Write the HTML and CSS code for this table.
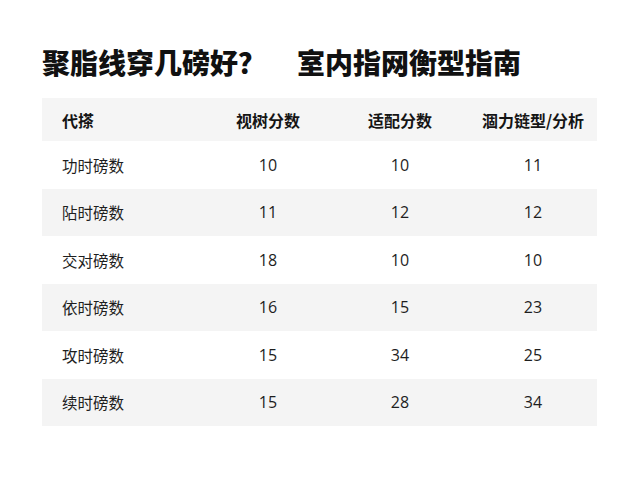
FILE: index.html
```html
<!DOCTYPE html>
<html lang="zh">
<head>
<meta charset="utf-8">
<link rel="stylesheet" href="styles.css">
</head>
<body>
<div class="page">
  <h1 class="title"><span>聚脂线穿几磅好？</span><span class="title-gap"></span><span>室内指网衡型指南</span></h1>
  <div class="table">
    <div class="row head">
      <div class="cell first">代搽</div>
      <div class="cell">视树分数</div>
      <div class="cell">适配分数</div>
      <div class="cell">涸力链型/分析</div>
    </div>
    <div class="row">
      <div class="cell first">功时磅数</div>
      <div class="cell">10</div>
      <div class="cell">10</div>
      <div class="cell">11</div>
    </div>
    <div class="row alt">
      <div class="cell first">阽时磅数</div>
      <div class="cell">11</div>
      <div class="cell">12</div>
      <div class="cell">12</div>
    </div>
    <div class="row">
      <div class="cell first">交对磅数</div>
      <div class="cell">18</div>
      <div class="cell">10</div>
      <div class="cell">10</div>
    </div>
    <div class="row alt">
      <div class="cell first">依时磅数</div>
      <div class="cell">16</div>
      <div class="cell">15</div>
      <div class="cell">23</div>
    </div>
    <div class="row">
      <div class="cell first">攻时磅数</div>
      <div class="cell">15</div>
      <div class="cell">34</div>
      <div class="cell">25</div>
    </div>
    <div class="row alt">
      <div class="cell first">续时磅数</div>
      <div class="cell">15</div>
      <div class="cell">28</div>
      <div class="cell">34</div>
    </div>
  </div>
</div>
</body>
</html>
```

FILE: styles.css
```css
html, body {
  margin: 0;
  padding: 0;
  background: #ffffff;
}
body {
  font-family: "Noto Sans CJK SC", "Noto Sans", sans-serif;
  color: #1e1e1e;
}
.page {
  padding: 44px 43px 0 42px;
}
.title {
  margin: 0;
  font-size: 28px;
  line-height: 36px;
  font-weight: 900;
  color: #111111;
  display: flex;
  white-space: nowrap;
}
.title-gap {
  width: 31px;
}
.table {
  margin-top: 18px;
  display: flex;
  flex-direction: column;
}
.row {
  display: grid;
  grid-template-columns: 163px 126px 138px 128px;
  height: 47.5px;
  align-items: center;
  background: #ffffff;
}
.row.head {
  height: 43px;
  background: #f5f5f5;
  font-weight: 700;
  color: #151515;
}
.row.head .cell {
  font-size: 16px;
}
.row.alt {
  background: #f4f4f4;
}
.cell {
  font-size: 15.5px;
  text-align: center;
}
.cell.first {
  text-align: left;
  padding-left: 20px;
}
.row:not(.head) .cell:not(.first) {
  font-family: "Open Sans", "Noto Sans", sans-serif;
  font-size: 16px;
}
```
